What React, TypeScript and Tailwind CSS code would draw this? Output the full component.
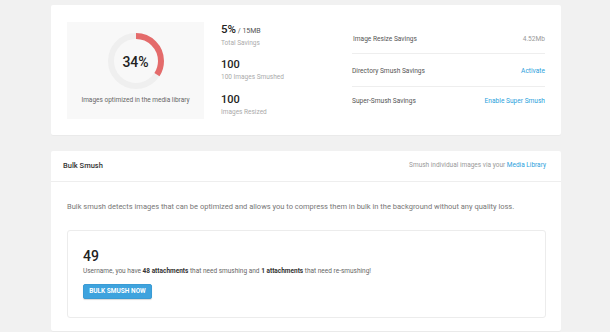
import React from "react";

function Ring() {
  const r = 25;
  const c = 2 * Math.PI * r;
  const pct = 0.34;
  return (
    <svg width="56" height="56" viewBox="0 0 56 56">
      <circle cx="28" cy="28" r={r} fill="none" stroke="#efefef" strokeWidth="6" />
      <circle
        cx="28"
        cy="28"
        r={r}
        fill="none"
        stroke="#e46b6b"
        strokeWidth="6"
        strokeDasharray={`${c * pct} ${c}`}
        transform="rotate(-90 28 28)"
      />
    </svg>
  );
}

export default function App() {
  return (
    <div
      className="w-[610px] h-[332px] overflow-hidden bg-[#f1f1f1] pt-[5px] pl-[51px]"
      style={{ fontFamily: "Roboto, 'Liberation Sans', sans-serif" }}
    >
      {/* Card 1 */}
      <div className="w-[510px] h-[130px] bg-white rounded-[2px] shadow-[0_1px_1px_rgba(0,0,0,0.03)] flex pt-[17px] pl-[16px] pr-[16px]">
        <div className="w-[137px] h-[97px] bg-[#f8f8f8] flex flex-col items-center pt-[11px]">
          <div className="relative w-[56px] h-[56px]">
            <Ring />
            <div className="absolute inset-0 flex items-center justify-center text-[14px] font-medium text-[#222] leading-none pt-[2px]">
              34%
            </div>
          </div>
          <div className="mt-[8px] text-[6.5px] text-[#666] leading-none">
            Images optimized in the media library
          </div>
        </div>
        <div className="w-[131px] ml-[17px] flex flex-col pt-[1px]">
          <div className="h-[35px] -mt-[2px] mb-[2px]">
            <div className="leading-[13px] text-[#222]">
              <span className="text-[11.5px] font-medium">5%</span>
              <span className="text-[7px] text-[#555]"> / 15MB</span>
            </div>
            <div className="text-[6.5px] text-[#aaa] leading-[10px]">Total Savings</div>
          </div>
          <div className="h-[35px]">
            <div className="leading-[13px] text-[11px] font-medium text-[#222]">100</div>
            <div className="text-[6.5px] text-[#aaa] leading-[10px] mt-[1px]">100 Images Smushed</div>
          </div>
          <div className="h-[35px]">
            <div className="leading-[13px] text-[11px] font-medium text-[#222]">100</div>
            <div className="text-[6.5px] text-[#aaa] leading-[10px] mt-[1px]">Images Resized</div>
          </div>
        </div>
        <div className="flex-1 flex flex-col">
          <div className="h-[32px] pt-[5px] flex items-center justify-between border-b border-[#eeeeee] text-[6.6px] pl-[1px]">
            <span className="text-[#555]">Image Resize Savings</span>
            <span className="text-[#999]">4.52Mb</span>
          </div>
          <div className="h-[33px] pt-[3px] flex items-center justify-between border-b border-[#eeeeee] text-[6.6px]">
            <span className="text-[#555]">Directory Smush Savings</span>
            <span className="text-[#2ba1dc]">Activate</span>
          </div>
          <div className="h-[30px] flex items-center justify-between text-[6.6px]">
            <span className="text-[#555]">Super-Smush Savings</span>
            <span className="text-[#2ba1dc]">Enable Super Smush</span>
          </div>
        </div>
      </div>

      {/* Card 2 */}
      <div className="mt-[16px] w-[510px] h-[180px] bg-white rounded-[2px] shadow-[0_1px_1px_rgba(0,0,0,0.03)]">
        <div className="h-[31px] flex items-center justify-between border-b border-[#eeeeee] pl-[12px] pr-[15px]">
          <span className="text-[7.5px] font-medium text-[#333]">Bulk Smush</span>
          <span className="text-[6.5px] text-[#999]">
            Smush individual images via your <span className="text-[#2ba1dc]">Media Library</span>
          </span>
        </div>
        <div className="px-[16px] pt-[20px]">
          <div className="text-[7.5px] text-[#777] leading-[10px]">
            Bulk smush detects images that can be optimized and allows you to compress them in bulk in the background without any quality loss.
          </div>
          <div className="mt-[18px] w-[479px] h-[88px] border border-[#ececec] rounded-[3px] pl-[15px] pt-[16px]">
            <div className="text-[14px] font-medium text-[#222] leading-[18px]">49</div>
            <div className="mt-[2px] text-[6.5px] text-[#666] leading-[9px]">
              Username, you have <b className="font-bold text-[#333]">48 attachments</b> that need smushing and{" "}
              <b className="font-bold text-[#333]">1 attachments</b> that need re-smushing!
            </div>
            <button className="mt-[8px] w-[69px] h-[15px] rounded-[2px] bg-[#3ea3de] border border-[#3a9bd4] shadow-[0_1px_1px_rgba(0,0,0,0.15)] text-white text-[6.5px] font-bold uppercase leading-none flex items-center justify-center">
              Bulk Smush Now
            </button>
          </div>
        </div>
      </div>
    </div>
  );
}
